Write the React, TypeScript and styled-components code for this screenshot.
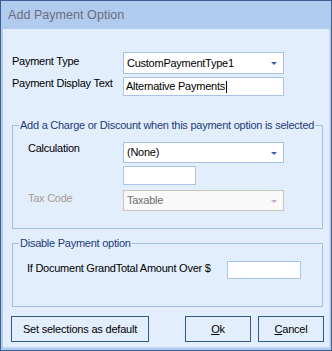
import styled, { createGlobalStyle } from 'styled-components'

const Global = createGlobalStyle`
    html, body {
        margin: 0;
        padding: 0;
        background: #e3eefd;
    }
    * {
        box-sizing: border-box;
    }
`

const Window = styled.div`
    width: 332px;
    height: 351px;
    display: flex;
    flex-direction: column;
    border: 1px solid #3d5f92;
    background: #b1cbef;
    padding: 0 1px 2px 2px;
    font-family: 'Liberation Sans', Arial, sans-serif;
    font-size: 11px;
    letter-spacing: -0.25px;
    color: #000;
`

const TitleBar = styled.div`
    height: 28px;
    flex: none;
    padding: 7px 0 0 5px;
    font-size: 12.6px;
    letter-spacing: 0;
    color: #6b6c7e;
`

const Body = styled.div`
    flex: 1;
    background: #e3eefd;
    border-right: 1px solid #c6d8f2;
    border-bottom: 1px solid #c6d8f2;
    padding: 23px 0 0 9px;
    display: flex;
    flex-direction: column;
`

const FieldGrid = styled.div<{ $label: number }>`
    display: grid;
    grid-template-columns: ${(p) => p.$label}px auto;
    row-gap: 3px;
    align-items: start;
`

const Label = styled.div<{ $top: number; $muted?: boolean }>`
    padding-top: ${(p) => p.$top}px;
    line-height: 13px;
    white-space: nowrap;
    color: ${(p) => (p.$muted ? '#a39d91' : '#000')};
`

const Combo = styled.div<{ $disabled?: boolean; $h?: number }>`
    width: 161px;
    height: ${(p) => p.$h ?? 21}px;
    display: flex;
    align-items: center;
    justify-content: space-between;
    padding: 0 6px 0 3px;
    background: ${(p) => (p.$disabled ? '#f9f9fa' : '#fff')};
    border: 1px solid ${(p) => (p.$disabled ? '#c9c5ba' : '#aac0df')};
    color: ${(p) => (p.$disabled ? '#6f6f6f' : '#000')};
    line-height: 13px;
`

const Arrow = styled.span<{ $disabled?: boolean }>`
    width: 0;
    height: 0;
    border-left: 3px solid transparent;
    border-right: 3px solid transparent;
    border-top: 3px solid ${(p) => (p.$disabled ? '#c4abc9' : '#3e5fa3')};
    margin-top: 1px;
`

const TextBox = styled.div<{ $w: number; $h?: number }>`
    width: ${(p) => p.$w}px;
    height: ${(p) => p.$h ?? 19}px;
    display: flex;
    align-items: center;
    padding: 0 2px;
    background: #fff;
    border: 1px solid #aac3e8;
    line-height: 13px;
`

const Caret = styled.span`
    display: inline-block;
    width: 1px;
    height: 12px;
    background: #000;
    margin-left: 1px;
`

const Group = styled.fieldset<{ $gap: number }>`
    margin: ${(p) => p.$gap}px 0 0 0;
    width: 311px;
    padding: 0;
    border: 1px solid #a2bfe6;
    min-width: 0;
`

const Legend = styled.legend`
    margin-left: 6px;
    padding: 0 1px;
    line-height: 14px;
    color: #1b3b78;
    white-space: nowrap;
`

const GroupBody = styled.div<{ $pad: string }>`
    padding: ${(p) => p.$pad};
    display: flex;
    flex-direction: column;
`

const CalcStack = styled.div`
    display: flex;
    flex-direction: column;
    gap: 3px;
`

const TaxRow = styled.div`
    margin-top: 5px;
`

const ButtonBar = styled.div`
    display: flex;
    align-items: center;
    margin-top: 9px;
    padding-right: 5px;
`

const Button = styled.button<{ $w: number }>`
    width: ${(p) => p.$w}px;
    height: 26px;
    padding: 0;
    margin-right: 7px;
    background: #e3eefd;
    border: 1px solid #2e5a8e;
    border-radius: 0;
    font-family: 'Liberation Sans', Arial, sans-serif;
    font-size: 11px;
    letter-spacing: -0.2px;
    color: #000;

    &:first-child {
        margin-right: auto;
        margin-left: -1px;
    }
    &:last-child {
        margin-right: 0;
    }

    u {
        text-decoration: underline;
    }
`

export default function App() {
    return (
        <>
            <Global />
            <Window>
                <TitleBar>Add Payment Option</TitleBar>
                <Body>
                    <FieldGrid $label={111}>
                        <Label $top={3}>Payment Type</Label>
                        <Combo $h={22}>
                            <span>CustomPaymentType1</span>
                            <Arrow />
                        </Combo>
                        <Label $top={0}>Payment Display Text</Label>
                        <TextBox $w={161}>
                            Alternative Payments
                            <Caret />
                        </TextBox>
                    </FieldGrid>

                    <Group $gap={22}>
                        <Legend>Add a Charge or Discount when this payment option is selected</Legend>
                        <GroupBody $pad="10px 0 17px 15px">
                            <FieldGrid $label={95}>
                                <Label $top={0}>Calculation</Label>
                                <CalcStack>
                                    <Combo>
                                        <span>(None)</span>
                                        <Arrow />
                                    </Combo>
                                    <TextBox $w={73} />
                                </CalcStack>
                            </FieldGrid>
                            <TaxRow>
                                <FieldGrid $label={95}>
                                    <Label $top={2} $muted>
                                        Tax Code
                                    </Label>
                                    <Combo $disabled>
                                        <span>Taxable</span>
                                        <Arrow $disabled />
                                    </Combo>
                                </FieldGrid>
                            </TaxRow>
                        </GroupBody>
                    </Group>

                    <Group $gap={7}>
                        <Legend>Disable Payment option</Legend>
                        <GroupBody $pad="11px 0 27px 14px">
                            <FieldGrid $label={200}>
                                <Label $top={1}>If Document GrandTotal Amount Over $</Label>
                                <TextBox $w={74} $h={18} />
                            </FieldGrid>
                        </GroupBody>
                    </Group>

                    <ButtonBar>
                        <Button $w={138}>Set selections as default</Button>
                        <Button $w={66}>
                            <u>O</u>k
                        </Button>
                        <Button $w={66}>
                            <u>C</u>ancel
                        </Button>
                    </ButtonBar>
                </Body>
            </Window>
        </>
    )
}
